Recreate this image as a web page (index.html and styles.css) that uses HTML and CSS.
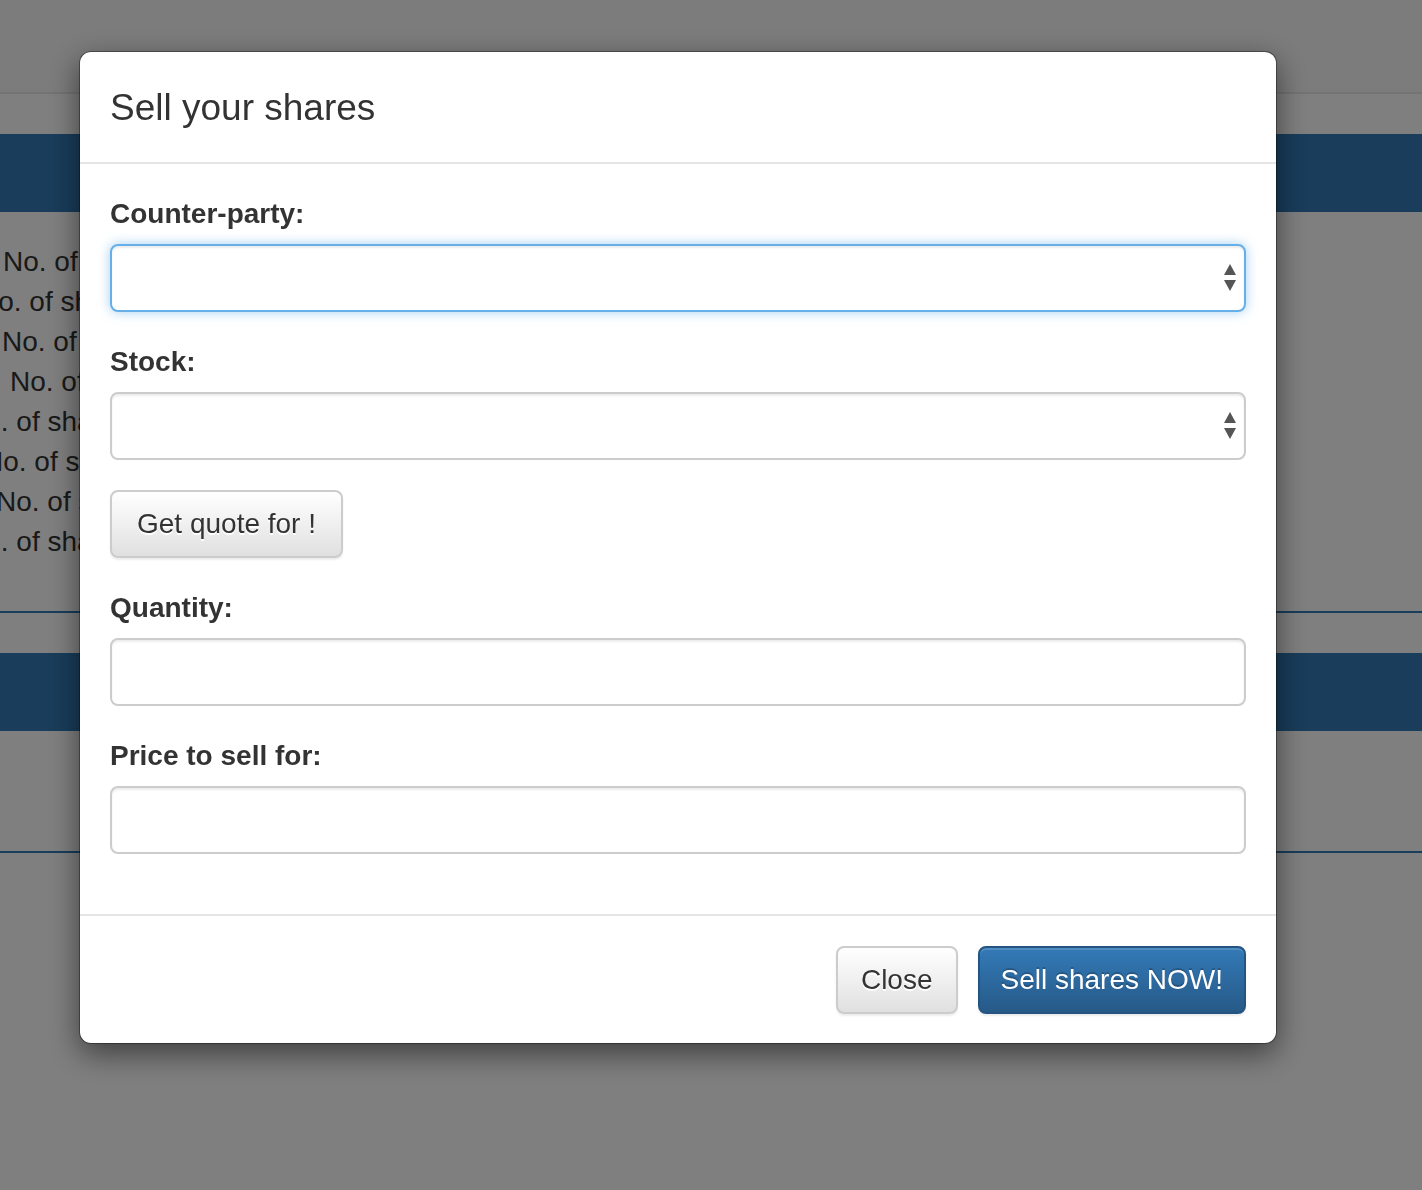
FILE: index.html
```html
<!DOCTYPE html>
<html lang="en">
<head>
<meta charset="utf-8">
<title>Sell your shares</title>
<link rel="stylesheet" href="styles.css">
</head>
<body>
<div class="page">
  <div class="navbar"></div>
  <div class="panel">
    <div class="panel-heading"></div>
    <div class="panel-body">
      <div class="row r1">No. of shares</div>
      <div class="row r2">No. of shares</div>
      <div class="row r3">No. of shares</div>
      <div class="row r4">No. of shares</div>
      <div class="row r5">No. of shares</div>
      <div class="row r6">No. of shares</div>
      <div class="row r7">No. of shares</div>
      <div class="row r8">No. of shares</div>
    </div>
  </div>
  <div class="panel">
    <div class="panel-heading"></div>
    <div class="panel-body empty"></div>
  </div>
</div>

<div class="backdrop"></div>

<div class="modal">
  <div class="modal-content">
    <div class="modal-header">
      <h4 class="modal-title">Sell your shares</h4>
    </div>
    <div class="modal-body">
      <div class="form-group">
        <label class="label">Counter-party:</label>
        <div class="select-wrap">
          <select class="form-control is-focus"><option></option></select>
          <svg class="select-arrows" width="14" height="27" viewBox="0 0 14 27"><path d="M7 0 L13 11 L1 11 Z" fill="#555"/><path d="M1 16 L13 16 L7 27 Z" fill="#555"/></svg>
        </div>
      </div>
      <div class="form-group">
        <label class="label">Stock:</label>
        <div class="select-wrap">
          <select class="form-control"><option></option></select>
          <svg class="select-arrows" width="14" height="27" viewBox="0 0 14 27"><path d="M7 0 L13 11 L1 11 Z" fill="#555"/><path d="M1 16 L13 16 L7 27 Z" fill="#555"/></svg>
        </div>
      </div>
      <div class="form-group">
        <button class="btn btn-default btn-quote" type="button">Get quote for !</button>
      </div>
      <div class="form-group">
        <label class="label">Quantity:</label>
        <input class="form-control" type="text">
      </div>
      <div class="form-group">
        <label class="label">Price to sell for:</label>
        <input class="form-control" type="text">
      </div>
    </div>
    <div class="modal-footer">
      <button class="btn btn-default btn-close" type="button">Close</button>
      <button class="btn btn-primary" type="button">Sell shares NOW!</button>
    </div>
  </div>
</div>
</body>
</html>
```
FILE: styles.css
```css
* { box-sizing: border-box; }
html, body { margin: 0; padding: 0; }
body {
  background: #ffffff;
  font-family: "Liberation Sans", Arial, Helvetica, sans-serif;
  color: #333333;
  height: 1190px;
  overflow: hidden;
}

/* background page */
.page { width: 100%; }
.navbar {
  height: 94px;
  background: #f8f8f8;
  border-bottom: 2px solid #e7e7e7;
  margin-bottom: 40px;
}
.panel {
  border-bottom: 2px solid #337ab7;
  margin-bottom: 40px;
}
.panel-heading {
  height: 78px;
  background: #337ab7;
}
.panel-body {
  padding: 30px 0 49px 0;
}
.panel-body.empty { height: 120px; padding: 0; }
.row {
  font-size: 28px;
  line-height: 40px;
  height: 40px;
  white-space: nowrap;
  color: #333;
}
.r1 { text-indent: 3px; }
.r2 { text-indent: -22px; }
.r3 { text-indent: 2px; }
.r4 { text-indent: 10px; }
.r5 { text-indent: -35px; }
.r6 { text-indent: -17px; }
.r7 { text-indent: -4px; }
.r8 { text-indent: -35px; }

.backdrop {
  position: fixed;
  inset: 0;
  background: rgba(0, 0, 0, 0.5);
}

/* modal */
.modal {
  position: fixed;
  inset: 0;
  padding: 51px 0 0 79px;
}
.modal-content {
  width: 1198px;
  background: #fff;
  border: 1px solid rgba(0, 0, 0, 0.35);
  border-radius: 12px;
  background-clip: padding-box;
  box-shadow: 0 10px 30px rgba(0, 0, 0, 0.5);
}
.modal-header {
  padding: 30px 30px 29px 30px;
  border-bottom: 2px solid #e5e5e5;
}
.modal-title {
  margin: 0;
  font-size: 37px;
  font-weight: 500;
  line-height: 51.4px;
  color: #333;
}
.modal-body {
  padding: 30px 30px 30px 30px;
}
.form-group { margin-bottom: 30px; }
.label {
  display: block;
  font-size: 28px;
  font-weight: bold;
  line-height: 40px;
  margin-bottom: 10px;
  color: #333;
}
.select-wrap { position: relative; }
.form-control {
  display: block;
  width: 100%;
  height: 68px;
  padding: 12px 24px;
  font-family: inherit;
  font-size: 28px;
  line-height: 40px;
  color: #555;
  background: #fff;
  border: 2px solid #cccccc;
  border-radius: 8px;
  box-shadow: inset 0 2px 2px rgba(0, 0, 0, 0.075);
  appearance: none;
  -webkit-appearance: none;
  outline: none;
  margin: 0;
}
.form-control.is-focus {
  border-color: #66afe9;
  box-shadow: inset 0 2px 2px rgba(0, 0, 0, 0.075), 0 0 12px rgba(102, 175, 233, 0.6);
}
.select-arrows {
  position: absolute;
  right: 9px;
  top: 20px;
  pointer-events: none;
}

.btn {
  display: inline-block;
  height: 68px;
  padding: 12px 24px;
  font-family: inherit;
  font-size: 28px;
  line-height: 40px;
  border-radius: 8px;
  border: 2px solid transparent;
  cursor: pointer;
  margin: 0;
  white-space: nowrap;
}
.btn-quote { padding-left: 25px; padding-right: 25px; }
.btn-close { padding-left: 23px; padding-right: 23px; }
.btn-default {
  color: #333;
  background: linear-gradient(to bottom, #ffffff 0%, #e0e0e0 100%);
  border-color: #cccccc;
  text-shadow: 0 2px 0 #fff;
  box-shadow: inset 0 2px 0 rgba(255, 255, 255, 0.15), 0 2px 2px rgba(0, 0, 0, 0.075);
}
.btn-primary {
  padding-left: 21px;
  padding-right: 21px;
  color: #fff;
  background: linear-gradient(to bottom, #337ab7 0%, #265a88 100%);
  border-color: #245580;
  text-shadow: 0 -2px 0 rgba(0, 0, 0, 0.2);
  box-shadow: inset 0 2px 0 rgba(255, 255, 255, 0.15), 0 2px 2px rgba(0, 0, 0, 0.075);
}
.modal-footer {
  display: flex;
  justify-content: flex-end;
  gap: 20px;
  padding: 30px 30px 29px 30px;
  border-top: 2px solid #e5e5e5;
}
```
